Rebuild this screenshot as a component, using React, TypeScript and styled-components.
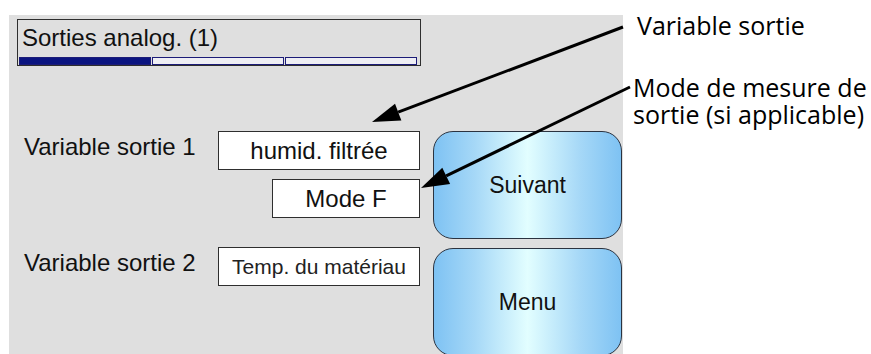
import React from "react";
import styled, { createGlobalStyle } from "styled-components";

// --- Global ---
const GlobalStyle = createGlobalStyle`
  html, body {
    margin: 0;
    padding: 0;
    background: #ffffff;
  }
  body {
    font-family: "Liberation Sans", Arial, sans-serif;
    color: #111;
  }
`;

// --- Layout ---
const Page = styled.div`
  position: relative;
  width: 871px;
  height: 354px;
  overflow: hidden;
  display: flex;
  align-items: flex-start;
  padding: 15px 0 0 9px;
  box-sizing: border-box;
`;

const Screen = styled.div`
  width: 614px;
  height: 339px;
  background: #dfdfdf;
  padding: 4px 1px 0 8px;
  box-sizing: border-box;
  overflow: hidden;
  display: flex;
  flex-direction: column;
`;

const Header = styled.div`
  width: 404px;
  height: 50px;
  border: 1px solid #2e2e2e;
  box-sizing: border-box;
  padding: 2px 3px 0 1px;
  display: flex;
  flex-direction: column;
`;

const HeaderTitle = styled.div`
  font-size: 24px;
  line-height: 32px;
  padding-left: 3px;
  color: #111;
`;

const Progress = styled.div`
  margin-top: 3px;
  height: 8px;
  display: flex;
  gap: 1px;
`;

const Segment = styled.div<{ $done?: boolean }>`
  flex: 1;
  box-sizing: border-box;
  border: 1px solid #1c1c78;
  background: ${(p) => (p.$done ? "#0b1480" : "#eeeef4")};
`;

const Body = styled.div`
  margin-top: 65px;
  display: flex;
  gap: 13px;
`;

const Fields = styled.div`
  width: 403px;
  display: grid;
  grid-template-columns: 201px 202px;
  grid-auto-rows: 39px;
  row-gap: 9px;
`;

const Label = styled.div<{ $gapTop?: number }>`
  grid-column: 1;
  margin-top: ${(p) => p.$gapTop ?? 0}px;
  padding-left: 7px;
  font-size: 24px;
  line-height: 31px;
  white-space: nowrap;
`;

const ValueBox = styled.div<{ $small?: boolean; $width?: number; $gapTop?: number }>`
  grid-column: 2;
  justify-self: end;
  width: ${(p) => p.$width ?? 202}px;
  height: 39px;
  margin-top: ${(p) => p.$gapTop ?? 0}px;
  box-sizing: border-box;
  border: 1px solid #2e2e2e;
  background: #ffffff;
  text-align: center;
  font-size: ${(p) => (p.$small ? 21 : 24)}px;
  line-height: 37px;
  color: ${(p) => (p.$small ? "#222" : "#111")};
  white-space: nowrap;
`;

const Buttons = styled.div`
  width: 190px;
  display: flex;
  flex-direction: column;
  gap: 9px;
`;

const SoftKey = styled.div`
  height: 108px;
  box-sizing: border-box;
  border: 1px solid #2b3340;
  border-radius: 20px;
  background: linear-gradient(
    90deg,
    #7ec2f3 0%,
    #a6d8f7 22%,
    #e2feff 50%,
    #a6d8f7 78%,
    #7ec2f3 100%
  );
  display: flex;
  align-items: center;
  justify-content: center;
  font-size: 23px;
  color: #111;
`;

const Notes = styled.div`
  margin-left: 10px;
  margin-top: -3px;
  display: flex;
  flex-direction: column;
  font-family: "Open Sans", "DejaVu Sans", sans-serif;
  font-size: 25px;
  line-height: 27px;
  color: #000;
  white-space: nowrap;
`;

const Note = styled.div<{ $gap?: number; $indent?: number }>`
  margin-top: ${(p) => p.$gap ?? 0}px;
  padding-left: ${(p) => p.$indent ?? 0}px;
`;

const Overlay = styled.svg`
  position: absolute;
  left: 0;
  top: 0;
  pointer-events: none;
`;

// --- Callout arrow ---
function Arrow({ x1, y1, x2, y2 }: { x1: number; y1: number; x2: number; y2: number }) {
  const dx = x1 - x2;
  const dy = y1 - y2;
  const len = Math.hypot(dx, dy);
  const ux = dx / len;
  const uy = dy / len;
  const head = 28;
  const half = 9;
  const bx = x2 + ux * head;
  const by = y2 + uy * head;
  const pts = [
    `${x2},${y2}`,
    `${bx - uy * half},${by + ux * half}`,
    `${bx + uy * half},${by - ux * half}`,
  ].join(" ");
  return (
    <g>
      <line x1={x1} y1={y1} x2={bx} y2={by} stroke="#000" strokeWidth={3} />
      <polygon points={pts} fill="#000" />
    </g>
  );
}

export default function App() {
  return (
    <>
      <GlobalStyle />
      <Page>
        <Screen>
          <Header>
            <HeaderTitle>Sorties analog. (1)</HeaderTitle>
            <Progress>
              <Segment $done />
              <Segment />
              <Segment />
            </Progress>
          </Header>
          <Body>
            <Fields>
              <Label>Variable sortie 1</Label>
              <ValueBox>humid. filtrée</ValueBox>
              <ValueBox $width={148}>Mode F</ValueBox>
              <Label $gapTop={20}>Variable sortie 2</Label>
              <ValueBox $small $gapTop={20}>
                Temp. du matériau
              </ValueBox>
            </Fields>
            <Buttons>
              <SoftKey>Suivant</SoftKey>
              <SoftKey>Menu</SoftKey>
            </Buttons>
          </Body>
        </Screen>
        <Notes>
          <Note $indent={4}>Variable sortie</Note>
          <Note $gap={35}>
            Mode de mesure de
            <br />
            sortie (si applicable)
          </Note>
        </Notes>
        <Overlay width={871} height={354} viewBox="0 0 871 354">
          <Arrow x1={623} y1={27} x2={372} y2={122} />
          <Arrow x1={630} y1={87} x2={421} y2={188} />
        </Overlay>
      </Page>
    </>
  );
}
